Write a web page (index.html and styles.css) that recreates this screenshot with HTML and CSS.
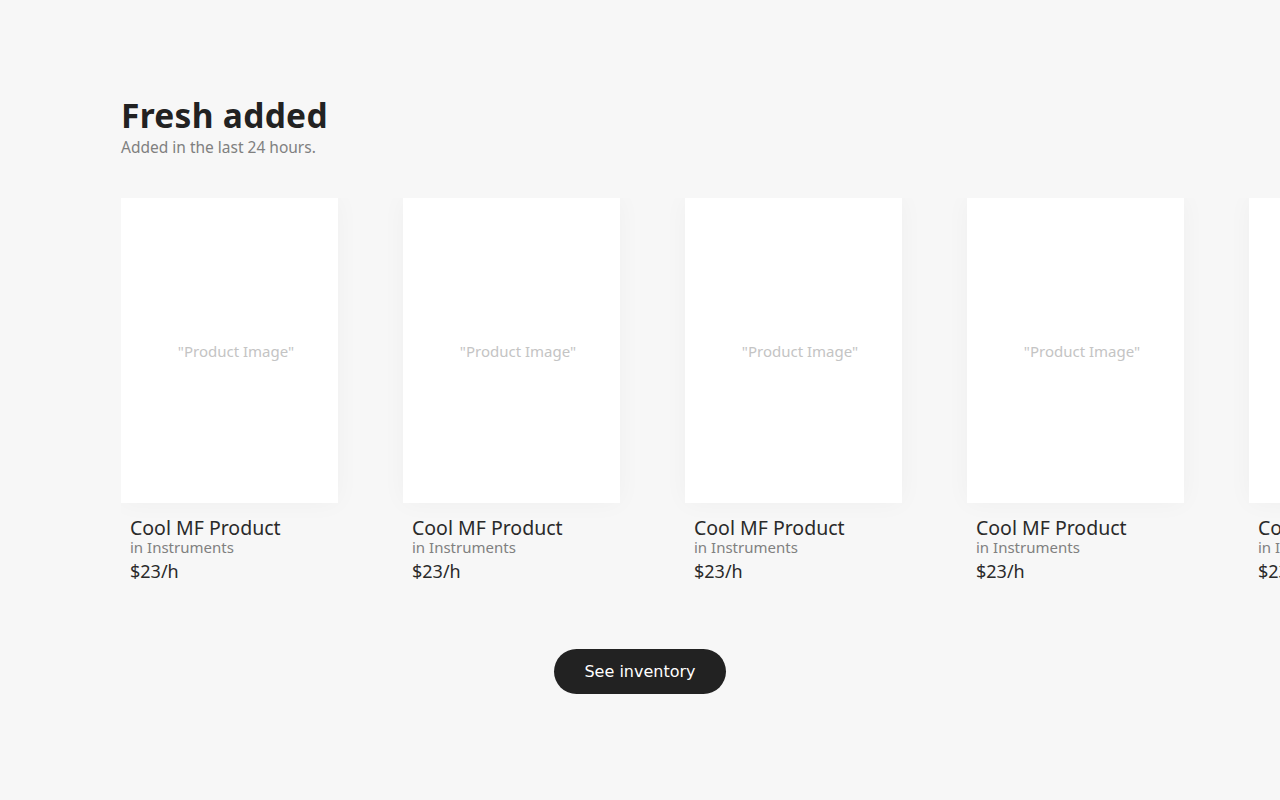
FILE: index.html
```html
<!DOCTYPE html>
<html lang="en">
<head>
<meta charset="utf-8">
<title>Fresh added</title>
<link rel="stylesheet" href="styles.css">
</head>
<body>
<main class="page">
  <section class="fresh">
    <header class="fresh-head">
      <h1 class="fresh-title">Fresh added</h1>
      <p class="fresh-sub">Added in the last 24 hours.</p>
    </header>
    <div class="carousel">
      <article class="card">
        <div class="card-img">"Product Image"</div>
        <div class="card-body">
          <h2 class="card-name">Cool MF Product</h2>
          <p class="card-cat">in Instruments</p>
          <p class="card-price">$23/h</p>
        </div>
      </article>
      <article class="card">
        <div class="card-img">"Product Image"</div>
        <div class="card-body">
          <h2 class="card-name">Cool MF Product</h2>
          <p class="card-cat">in Instruments</p>
          <p class="card-price">$23/h</p>
        </div>
      </article>
      <article class="card">
        <div class="card-img">"Product Image"</div>
        <div class="card-body">
          <h2 class="card-name">Cool MF Product</h2>
          <p class="card-cat">in Instruments</p>
          <p class="card-price">$23/h</p>
        </div>
      </article>
      <article class="card">
        <div class="card-img">"Product Image"</div>
        <div class="card-body">
          <h2 class="card-name">Cool MF Product</h2>
          <p class="card-cat">in Instruments</p>
          <p class="card-price">$23/h</p>
        </div>
      </article>
      <article class="card">
        <div class="card-img">"Product Image"</div>
        <div class="card-body">
          <h2 class="card-name">Cool MF Product</h2>
          <p class="card-cat">in Instruments</p>
          <p class="card-price">$23/h</p>
        </div>
      </article>
    </div>
    <div class="actions">
      <button class="btn-inventory" type="button">See inventory</button>
    </div>
  </section>
</main>
</body>
</html>
```

FILE: styles.css
```css
* { box-sizing: border-box; }
html, body {
  margin: 0;
  padding: 0;
  background: #f7f7f7;
  font-family: "Noto Sans", "Open Sans", sans-serif;
  color: #222;
}
.page {
  width: 1280px;
  height: 800px;
  overflow: hidden;
}
.fresh {
  padding: 94px 0 0 121px;
}
.fresh-head {
  margin-bottom: 40px;
}
.fresh-title {
  margin: 0;
  font-size: 33.5px;
  line-height: 42px;
  font-weight: 700;
  color: #222;
  letter-spacing: 0.3px;
}
.fresh-sub {
  margin: 0;
  font-size: 15.5px;
  line-height: 22px;
  color: #808080;
}
.carousel {
  display: flex;
  gap: 65px;
  overflow: hidden;
}
.card {
  flex: 0 0 217px;
  width: 217px;
}
.card-img {
  height: 305px;
  background: #fff;
  box-shadow: 0 0 24px rgba(0,0,0,0.035);
  display: flex;
  align-items: center;
  justify-content: center;
  padding-left: 13px;
  color: #c4c4c4;
  font-size: 15px;
}
.card-body {
  padding: 14px 9px 0;
}
.card-name {
  margin: 0;
  font-size: 19.5px;
  line-height: 22px;
  font-weight: 400;
  color: #2a2a2a;
}
.card-cat {
  margin: 0;
  font-size: 15px;
  line-height: 16px;
  color: #808080;
}
.card-price {
  margin: 5px 0 0;
  font-size: 18px;
  line-height: 22px;
  color: #2a2a2a;
}
.actions {
  display: flex;
  justify-content: center;
  margin: 67px 0 0 -121px;
}
.btn-inventory {
  height: 45px;
  padding: 0 30px;
  border: none;
  border-radius: 23px;
  background: #222;
  color: #fff;
  font-family: "DejaVu Sans", sans-serif;
  font-size: 16px;
  cursor: pointer;
}
```
